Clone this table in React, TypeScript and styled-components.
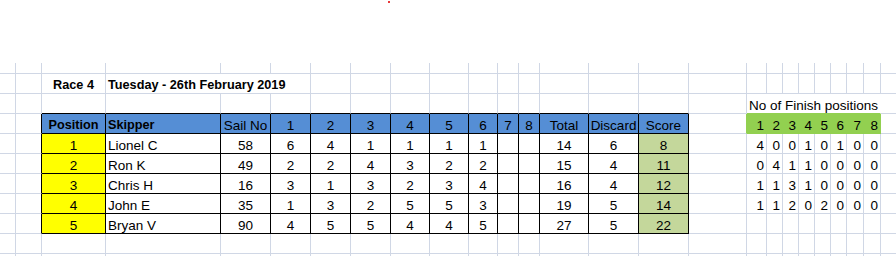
import React from "react";
import styled, { createGlobalStyle } from "styled-components";

type Align = "left" | "center" | "right";

type CellSpec = {
  text?: string;
  span?: number;
  align?: Align;
  bold?: boolean;
  fill?: string;
  right: string;
  bottom: string;
};

const GRID = "#d0d7e5";
const BLACK = "#000000";
const BLUE = "#558ed5";
const YELLOW = "#ffff00";
const SCORE = "#c4d79b";
const LIME = "#92d050";

// column widths incl. the 1px gridline on the right (A..Z)
const COLS = [16, 26, 64, 115, 50, 40, 40, 40, 39, 39, 29, 21, 21, 49, 50, 50, 58, 20, 16, 16, 16, 16, 16, 17, 17, 16];
const ROW_COUNT = 11;

const HEADERS = ["Position", "Skipper", "Sail No", "1", "2", "3", "4", "5", "6", "7", "8", "Total", "Discard", "Score"];

const RESULTS = [
  ["1", "Lionel C", "58", "6", "4", "1", "1", "1", "1", "", "", "14", "6", "8"],
  ["2", "Ron K", "49", "2", "2", "4", "3", "2", "2", "", "", "15", "4", "11"],
  ["3", "Chris H", "16", "3", "1", "3", "2", "3", "4", "", "", "16", "4", "12"],
  ["4", "John E", "35", "1", "3", "2", "5", "5", "3", "", "", "19", "5", "14"],
  ["5", "Bryan V", "90", "4", "5", "5", "4", "4", "5", "", "", "27", "5", "22"],
];

const FINISHES = [
  [4, 0, 0, 1, 0, 1, 0, 0],
  [0, 4, 1, 1, 0, 0, 0, 0],
  [1, 1, 3, 1, 0, 0, 0, 0],
  [1, 1, 2, 0, 2, 0, 0, 0],
];

const buildSheet = (): (CellSpec | null)[][] => {
  const rows: (CellSpec | null)[][] = Array.from({ length: ROW_COUNT }, () =>
    COLS.map(() => ({ right: GRID, bottom: GRID }))
  );
  const set = (r: number, c: number, patch: Partial<CellSpec>) => {
    Object.assign(rows[r][c] as CellSpec, patch);
  };

  // title line
  set(1, 2, { text: "Race 4", bold: true, align: "center" });
  set(1, 3, { text: "Tuesday - 26th February 2019", bold: true, span: 3 });
  rows[1][4] = null;
  rows[1][5] = null;

  // results table C..P, rows 3..8
  for (let c = 2; c <= 15; c++) {
    set(2, c, { bottom: BLACK });
    for (let r = 3; r <= 8; r++) set(r, c, { right: BLACK, bottom: BLACK });
    const label = HEADERS[c - 2];
    set(3, c, {
      text: label,
      fill: BLUE,
      bold: c <= 3,
      align: c === 3 ? "left" : "center",
    });
  }
  for (let r = 3; r <= 8; r++) set(r, 1, { right: BLACK });

  RESULTS.forEach((line, i) => {
    line.forEach((value, j) => {
      const c = j + 2;
      set(i + 4, c, {
        text: value,
        align: c === 3 ? "left" : "center",
        fill: c === 2 ? YELLOW : c === 15 ? SCORE : undefined,
      });
    });
  });

  // finish positions R..Y
  set(2, 17, { text: "No of Finish positions", span: 8, right: "transparent", bottom: LIME });
  for (let c = 18; c <= 24; c++) rows[2][c] = null;
  set(3, 16, { right: LIME });
  for (let c = 17; c <= 24; c++) {
    set(3, c, { text: String(c - 16), align: "right", fill: LIME, right: LIME, bottom: LIME });
  }
  FINISHES.forEach((line, i) => {
    line.forEach((n, j) => set(i + 4, j + 17, { text: String(n), align: "right" }));
  });

  return rows;
};

const GlobalStyle = createGlobalStyle`
  html, body {
    margin: 0;
    background: #ffffff;
    overflow: hidden;
  }
  body {
    font-family: "Liberation Sans", Arial, sans-serif;
    color: #000000;
  }
`;

const Page = styled.div`
  width: 896px;
  height: 256px;
  overflow: hidden;
`;

const Blank = styled.div`
  height: 63px;
  box-sizing: border-box;
  padding: 1px 0 0 388px;
`;

const Mark = styled.div`
  width: 2px;
  height: 2px;
  background: #e8393a;
`;

const Sheet = styled.div`
  display: grid;
  grid-template-columns: ${COLS.map((w) => `${w}px`).join(" ")};
  grid-template-rows: 11px repeat(${ROW_COUNT - 1}, 20px);
`;

const justify: Record<Align, string> = {
  left: "flex-start",
  center: "center",
  right: "flex-end",
};

const Cell = styled.div<{
  $span: number;
  $align: Align;
  $bold?: boolean;
  $fill?: string;
  $right: string;
  $bottom: string;
}>`
  grid-column: span ${(p) => p.$span};
  box-sizing: border-box;
  min-width: 0;
  display: flex;
  align-items: flex-end;
  justify-content: ${(p) => justify[p.$align]};
  padding: 0 2px;
  background: ${(p) => p.$fill ?? "transparent"};
  border-right: 1px solid ${(p) => p.$right};
  border-bottom: 1px solid ${(p) => p.$bottom};
  font-size: ${(p) => (p.$bold ? "12.7px" : "13.5px")};
  font-weight: ${(p) => (p.$bold ? 700 : 400)};
  line-height: 15px;
  white-space: nowrap;
`;

const sheet = buildSheet();

export default function App() {
  return (
    <Page>
      <GlobalStyle />
      <Blank>
        <Mark />
      </Blank>
      <Sheet>
        {sheet.map((row, r) =>
          row.map((cell, c) =>
            cell ? (
              <Cell
                key={`${r}-${c}`}
                $span={cell.span ?? 1}
                $align={cell.align ?? "left"}
                $bold={cell.bold}
                $fill={cell.fill}
                $right={cell.right}
                $bottom={cell.bottom}
              >
                {cell.text}
              </Cell>
            ) : null
          )
        )}
      </Sheet>
    </Page>
  );
}
